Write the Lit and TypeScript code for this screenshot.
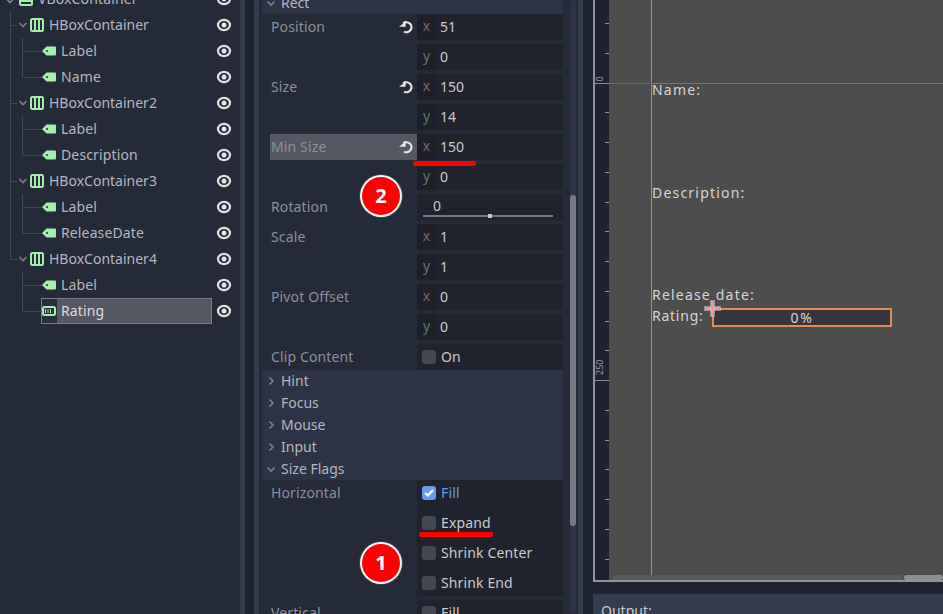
import {LitElement, css, html, svg} from 'lit';
import {customElement} from 'lit/decorators.js';

const GREEN = '#a5efac';

type TreeRow = {
  name: string;
  kind: 'vbox' | 'hbox' | 'label' | 'progress';
  last?: boolean;
  parentLast?: boolean;
  selected?: boolean;
};

const TREE: TreeRow[] = [
  {name: 'VBoxContainer', kind: 'vbox'},
  {name: 'HBoxContainer', kind: 'hbox'},
  {name: 'Label', kind: 'label'},
  {name: 'Name', kind: 'label', last: true},
  {name: 'HBoxContainer2', kind: 'hbox'},
  {name: 'Label', kind: 'label'},
  {name: 'Description', kind: 'label', last: true},
  {name: 'HBoxContainer3', kind: 'hbox'},
  {name: 'Label', kind: 'label'},
  {name: 'ReleaseDate', kind: 'label', last: true},
  {name: 'HBoxContainer4', kind: 'hbox', last: true},
  {name: 'Label', kind: 'label', parentLast: true},
  {name: 'Rating', kind: 'progress', last: true, parentLast: true, selected: true},
];

const eye = html`<svg class="eye" width="16" height="14" viewBox="0 0 16 14">
  <ellipse cx="8" cy="7" rx="6" ry="5.2" fill="none" stroke="#e2e2e2" stroke-width="2.2" />
  <circle cx="8" cy="7" r="2.5" fill="#e2e2e2" />
</svg>`;

const reset = html`<svg class="reset" width="16" height="16" viewBox="0 0 16 16">
  <path d="M5.2 4.400A5 5 0 1 1 6 12.600" fill="none" stroke="#e6e6e6" stroke-width="2.200" />
  <path d="M1 7.800H7.600V2.800Z" fill="#e6e6e6" />
</svg>`;

const chevronDown = (x: number, y: number) =>
  svg`<path d="M${x - 3.5} ${y - 2}L${x} ${y + 1.5}L${x + 3.5} ${y - 2}" fill="none" stroke="#7d818c" stroke-width="1.6" />`;

// guias del arbol, un svg por fila
function guides(row: TreeRow) {
  const line = '#434857';
  if (row.kind === 'vbox') {
    return svg`${chevronDown(10, 15)}`;
  }
  if (row.kind === 'hbox') {
    return svg`
      <path d="M10.5 0V${row.last ? 13.5 : 26}M10.5 13.5H17" stroke="${line}" fill="none" />
      ${chevronDown(23, 13)}`;
  }
  return svg`
    ${row.parentLast ? '' : svg`<path d="M10.5 0V26" stroke="${line}" />`}
    <path d="M22.5 0V${row.last ? 13.5 : 26}M22.5 13.5H42" stroke="${line}" fill="none" />`;
}

function nodeIcon(kind: TreeRow['kind']) {
  if (kind === 'hbox') {
    return html`<svg class="ico-box" width="14" height="14" viewBox="0 0 14 14">
      <rect x="1" y="1" width="12" height="12" rx="1.5" fill="none" stroke="${GREEN}" stroke-width="2" />
      <path d="M5 1V13M9 1V13" stroke="${GREEN}" stroke-width="2" />
    </svg>`;
  }
  if (kind === 'vbox') {
    return html`<svg class="ico-box" width="14" height="14" viewBox="0 0 14 14">
      <rect x="1" y="1" width="12" height="12" rx="1.5" fill="none" stroke="${GREEN}" stroke-width="2" />
      <path d="M1 5H13M1 9H13" stroke="${GREEN}" stroke-width="2" />
    </svg>`;
  }
  if (kind === 'progress') {
    return html`<svg class="ico-leaf" width="14" height="10" viewBox="0 0 14 10">
      <rect x="1" y="1" width="12" height="8" rx="1.5" fill="none" stroke="${GREEN}" stroke-width="2" />
      <path d="M3.5 3V7M6 3V7M8.5 3V7" stroke="${GREEN}" />
    </svg>`;
  }
  return html`<svg class="ico-leaf" width="14" height="10" viewBox="0 0 14 10">
    <path fill-rule="evenodd" d="M0 5L4.5 .5H13A1 1 0 0 1 14 1.5V8.500A1 1 0 0 1 13 9.500H4.500ZM5 4A1 1 0 1 0 5 6A1 1 0 1 0 5 4Z" fill="${GREEN}" />
  </svg>`;
}

@customElement('app-root')
export class AppRoot extends LitElement {
  static styles = css`
    :host {
      display: block;
      width: 943px;
      height: 614px;
      overflow: hidden;
      position: relative;
      background: #1f2330;
      font-family: 'Noto Sans', sans-serif;
      font-size: 14px;
      color: #c4c6cc;
    }
    .root {
      display: flex;
      height: 614px;
    }
    .strip {
      flex: none;
      width: 5px;
      background: #333b4f;
    }
    .gutter {
      flex: none;
      width: 9px;
    }
    .gutter-wide {
      flex: none;
      width: 10px;
    }
    /* sube el texto 1px dentro de una fila centrada */
    .t {
      margin-bottom: 2px;
    }
    .wide {
      letter-spacing: 0.13px;
    }

    /* arbol de escena */
    .tree {
      flex: none;
      width: 240px;
      background: #252a39;
      overflow: hidden;
    }
    .tree-list {
      margin-top: -14px;
    }
    .row {
      display: flex;
      align-items: center;
      height: 26px;
      position: relative;
    }
    .guides {
      position: absolute;
      left: 0;
      top: 0;
    }
    .node {
      display: flex;
      align-items: center;
      width: 171px;
      height: 26px;
      margin-left: 41px;
      box-sizing: border-box;
      flex: none;
      padding-left: 1px;
      gap: 5px;
      color: #b4b7bf;
    }
    .node.vbox {
      width: 194px;
      margin-left: 18px;
    }
    .node.hbox {
      width: 182px;
      margin-left: 30px;
      padding-left: 0;
    }
    .node.selected {
      box-shadow: inset 0 0 0 1px #7a7d88;
      background: linear-gradient(90deg, #2a2f40 16px, #555762 16px);
      color: #dcdde1;
    }
    .eye {
      margin-left: 4px;
      flex: none;
    }
    .ico-box,
    .ico-leaf {
      flex: none;
      display: block;
    }

    /* inspector */
    .inspector {
      flex: none;
      width: 319px;
      background: #252a39;
      display: flex;
      overflow: hidden;
      padding-left: 3px;
      box-sizing: border-box;
    }
    .props {
      width: 301px;
      flex: none;
      margin-top: -8px;
    }
    .section {
      background: #2d3346;
      height: 22px;
      display: flex;
      align-items: center;
      gap: 6px;
      padding-left: 5px;
      color: #b4b7bf;
    }
    .section svg {
      flex: none;
    }
    .prop {
      display: grid;
      grid-template-columns: 155px 146px;
      margin-bottom: 4px;
    }
    .prop.tight {
      margin-bottom: 0;
    }
    .prop-name {
      display: flex;
      align-items: center;
      justify-content: space-between;
      height: 26px;
      padding: 0 3px 0 9px;
      color: #8c8f99;
      box-sizing: border-box;
    }
    .prop-name.hot {
      background: #555862;
      margin-left: 8px;
      padding-left: 1px;
    }
    .values {
      display: flex;
      flex-direction: column;
      gap: 4px;
    }
    .field {
      height: 26px;
      background: #20232e;
      display: flex;
      align-items: center;
      color: #c8cacf;
    }
    .axis {
      width: 19px;
      height: 26px;
      line-height: 24px;
      text-align: center;
      background: #1d2029;
      margin-right: 4px;
      flex: none;
    }
    .axis.x {
      color: #80665c;
    }
    .axis.y {
      color: #557c66;
    }
    .slider {
      height: 26px;
      background: #20232e;
      padding: 0 10px 0 6px;
      position: relative;
      box-sizing: border-box;
      color: #c8cacf;
      line-height: 24px;
      text-indent: 10px;
    }
    .track {
      position: absolute;
      left: 6px;
      right: 10px;
      bottom: 3px;
      height: 2px;
      background: #73757e;
    }
    .grab {
      position: absolute;
      left: 65px;
      top: -1px;
      width: 4px;
      height: 4px;
      background: #c9cacd;
    }
    .flags {
      background: #20232e;
      display: flex;
      flex-direction: column;
      gap: 4px;
    }
    .check {
      height: 26px;
      display: flex;
      align-items: center;
      gap: 5px;
      padding-left: 5px;
      background: #20232e;
      color: #c8cacf;
    }
    .box {
      width: 14px;
      height: 14px;
      border-radius: 3px;
      background: #454852;
      flex: none;
    }
    .box.on {
      background: #699ce8;
      display: flex;
      align-items: center;
      justify-content: center;
    }
    .check.on {
      color: #699ce8;
    }
    .scrollbar {
      flex: none;
      width: 6px;
      margin-left: 7px;
      background: #2d3346;
      position: relative;
      border-radius: 3px;
    }
    .thumb {
      position: absolute;
      top: 195px;
      height: 331px;
      left: 0;
      width: 6px;
      border-radius: 3px;
      background: #767986;
    }

    /* visor */
    .right {
      flex: none;
      width: 350px;
      display: flex;
      flex-direction: column;
      gap: 11px;
    }
    .frame {
      flex: none;
      height: 582px;
      border-left: 2px solid #8f939f;
      border-bottom: 2px solid #8f939f;
      box-sizing: border-box;
      display: flex;
    }
    .ruler {
      flex: none;
      width: 14px;
      background: #1e2230;
      position: relative;
    }
    .tick {
      position: absolute;
      right: 0;
      width: 4px;
      height: 1px;
      background: #8d909c;
    }
    .tick.long {
      width: 14px;
    }
    .ruler-text {
      position: absolute;
      left: 0;
      width: 10px;
      font-size: 9px;
      line-height: 10px;
      text-align: center;
      transform: rotate(-90deg);
      color: #9a9da8;
    }
    .view {
      flex: 1;
      background: #4d4d4d;
      position: relative;
      overflow: hidden;
      color: #d6d6d6;
    }
    .canvas-text {
      position: absolute;
      left: 43px;
      line-height: 20px;
      letter-spacing: 1.2px;
      white-space: nowrap;
    }
    .canvas-text.tight {
      letter-spacing: 0.75px;
    }
    .v-top {
      position: absolute;
      left: 42px;
      top: 0;
      width: 1px;
      height: 83px;
      background: #8cab3c;
    }
    .v-bottom {
      position: absolute;
      left: 42px;
      top: 84px;
      width: 1px;
      bottom: 0;
      background: #7f9f80;
    }
    .h-left {
      position: absolute;
      left: 0;
      top: 83px;
      width: 43px;
      height: 1px;
      background: #b04a4a;
    }
    .h-right {
      position: absolute;
      left: 43px;
      right: 0;
      top: 83px;
      height: 1px;
      background: #a0559a;
    }
    .bar {
      position: absolute;
      left: 103px;
      top: 308px;
      width: 180px;
      height: 19px;
      box-sizing: border-box;
      border: 2px solid #e48a55;
      background: #38353c;
      text-align: center;
      line-height: 15px;
      letter-spacing: 1.6px;
    }
    .cross-h {
      position: absolute;
      left: 96px;
      top: 307px;
      width: 15px;
      height: 3px;
      background: #ff8f96;
      box-shadow: 0 0 0 1px rgba(230, 230, 230, 0.45);
    }
    .cross-v {
      position: absolute;
      left: 102px;
      top: 301px;
      width: 3px;
      height: 15px;
      background: #ff8f96;
      box-shadow: 0 0 0 1px rgba(230, 230, 230, 0.45);
    }
    .hbar {
      position: absolute;
      left: 3px;
      right: 40px;
      top: 575px;
      height: 5px;
      border-radius: 3px;
      background: #5a5a5a;
    }
    .hthumb {
      position: absolute;
      right: 0;
      width: 39px;
      top: 575px;
      height: 5px;
      border-radius: 3px;
      background: #8f8f8f;
    }
    .output {
      flex: 1;
      min-height: 0;
      overflow: hidden;
      background: #343c50;
      box-shadow: inset 0 1px 0 #20242f;
      padding: 8px 8px 0;
      line-height: 20px;
      color: #c8cacf;
    }

    /* anotaciones sobre la captura */
    .badge {
      position: absolute;
      width: 38px;
      height: 38px;
      border-radius: 50%;
      background: #f00;
      color: #fff;
      font-weight: 700;
      font-size: 20px;
      line-height: 38px;
      text-align: center;
      box-shadow: 0 0 0 2px #fff, 0 0 0 3px #444;
    }
    .badge.one {
      left: 362px;
      top: 544px;
    }
    .badge.two {
      left: 362px;
      top: 177px;
    }
    .mark {
      position: absolute;
      height: 5px;
      border-radius: 2px;
      background: #f00;
    }
    .mark.one {
      left: 419px;
      top: 532px;
      width: 74px;
    }
    .mark.two {
      left: 413px;
      top: 161px;
      width: 63px;
    }
  `;

  private renderTree() {
    return TREE.map(
      (row) => html`<div class="row">
        <svg class="guides" width="44" height="26">${guides(row)}</svg>
        <div class="node ${row.kind} ${row.selected ? 'selected' : ''}">
          ${nodeIcon(row.kind)}<span class="t ${row.kind === 'hbox' ? '' : 'wide'}">${row.name}</span>
        </div>
        ${eye}
      </div>`,
    );
  }

  private section(name: string, open = false) {
    return html`<div class="section">
      <svg width="8" height="10" viewBox="0 0 8 10">
        ${open
          ? svg`<path d="M.5 3.500L4 7L7.500 3.500" fill="none" stroke="#7d818c" stroke-width="1.600" />`
          : svg`<path d="M2.500 1.500L6 5L2.500 8.500" fill="none" stroke="#7d818c" stroke-width="1.600" />`}
      </svg>
      <span class="t">${name}</span>
    </div>`;
  }

  private vector(name: string, x: string, y: string, opts: {reset?: boolean; hot?: boolean} = {}) {
    return html`<div class="prop">
      <div class="prop-name ${opts.hot ? 'hot' : ''}">
        <span class="t wide">${name}</span>${opts.reset ? reset : ''}
      </div>
      <div class="values">
        <div class="field"><span class="axis x">x</span><span class="t">${x}</span></div>
        <div class="field"><span class="axis y">y</span><span class="t">${y}</span></div>
      </div>
    </div>`;
  }

  private check(name: string, on = false) {
    return html`<div class="check ${on ? 'on' : ''}">
      <span class="box ${on ? 'on' : ''}">
        ${on
          ? html`<svg width="10" height="8" viewBox="0 0 10 8">
              <path d="M1 4L3.800 6.500L9 1" fill="none" stroke="#fff" stroke-width="2" />
            </svg>`
          : ''}
      </span>
      <span class="t wide">${name}</span>
    </div>`;
  }

  private renderRuler() {
    const ticks: number[] = [];
    for (let i = -2; i < 17; i++) ticks.push(Math.floor(83 + i * 29.75));
    return html`<div class="ruler">
      ${ticks.map(
        (y) => html`<div
          class="tick ${y === 83 || y === 380 ? 'long' : ''}"
          style="top:${y}px"
        ></div>`,
      )}
      <div class="ruler-text" style="top:74px">0</div>
      <div class="ruler-text" style="top:365px">250</div>
    </div>`;
  }

  render() {
    return html`
      <div class="root">
        <div class="tree"><div class="tree-list">${this.renderTree()}</div></div>
        <div class="strip"></div>
        <div class="gutter"></div>
        <div class="strip"></div>
        <div class="inspector">
          <div class="props">
            ${this.section('Rect', true)}
            ${this.vector('Position', '51', '0', {reset: true})}
            ${this.vector('Size', '150', '14', {reset: true})}
            ${this.vector('Min Size', '150', '0', {reset: true, hot: true})}
            <div class="prop">
              <div class="prop-name"><span class="t wide">Rotation</span></div>
              <div class="slider">0<div class="track"><div class="grab"></div></div></div>
            </div>
            ${this.vector('Scale', '1', '1')}
            ${this.vector('Pivot Offset', '0', '0')}
            <div class="prop tight">
              <div class="prop-name"><span class="t wide">Clip Content</span></div>
              ${this.check('On')}
            </div>
            ${this.section('Hint')}
            ${this.section('Focus')}
            ${this.section('Mouse')}
            ${this.section('Input')}
            ${this.section('Size Flags', true)}
            <div class="prop">
              <div class="prop-name"><span class="t wide">Horizontal</span></div>
              <div class="flags">
                ${this.check('Fill', true)}
                ${this.check('Expand')}
                ${this.check('Shrink Center')}
                ${this.check('Shrink End')}
              </div>
            </div>
            <div class="prop">
              <div class="prop-name"><span class="t wide">Vertical</span></div>
              <div class="flags">${this.check('Fill')}</div>
            </div>
          </div>
          <div class="scrollbar"><div class="thumb"></div></div>
        </div>
        <div class="strip"></div>
        <div class="gutter-wide"></div>
        <div class="right">
          <div class="frame">
            ${this.renderRuler()}
            <div class="view">
              <div class="v-top"></div>
              <div class="v-bottom"></div>
              <div class="h-left"></div>
              <div class="h-right"></div>
              <div class="canvas-text" style="top:80px">Name:</div>
              <div class="canvas-text" style="top:183px">Description:</div>
              <div class="canvas-text" style="top:285px">Release date:</div>
              <div class="canvas-text tight" style="top:306px">Rating:</div>
              <div class="bar">0%</div>
              <div class="cross-h"></div>
              <div class="cross-v"></div>
              <div class="hbar"></div>
              <div class="hthumb"></div>
            </div>
          </div>
          <div class="output">Output:</div>
        </div>
      </div>
      <div class="mark two"></div>
      <div class="mark one"></div>
      <div class="badge two">2</div>
      <div class="badge one">1</div>
    `;
  }
}
